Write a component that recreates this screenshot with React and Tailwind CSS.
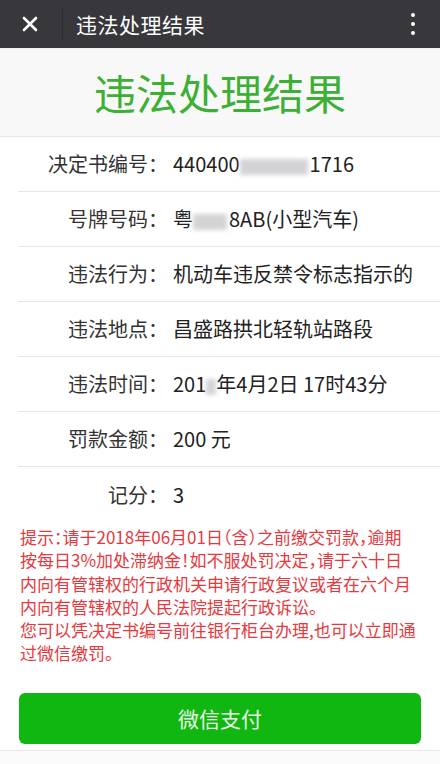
import { X } from 'lucide-react'

const FONT = { fontFamily: '"Noto Sans CJK SC", "Noto Sans", sans-serif' }

function Blur({ w }) {
  return <span className="inline-block h-[16px] align-middle bg-[#c9c9cc] blur-[2px] opacity-80" style={{ width: w }} />
}

const ROWS = [
  { label: '决定书编号：', value: <>440400<Blur w={68} /><span className="ml-[2px]">1716</span></> },
  { label: '号牌号码：', value: <>粤<Blur w={34} /><span className="ml-[2px]">8AB(小型汽车)</span></> },
  { label: '违法行为：', value: '机动车违反禁令标志指示的' },
  { label: '违法地点：', value: '昌盛路拱北轻轨站路段' },
  { label: '违法时间：', value: <>201<Blur w={10} />年4月2日 17时43分</> },
  { label: '罚款金额：', value: '200 元' },
  { label: '记分：', value: '3' },
]

const NOTICE = [
  '提示：请于2018年06月01日（含）之前缴交罚款，逾期',
  '按每日3%加处滞纳金！如不服处罚决定，请于六十日',
  '内向有管辖权的行政机关申请行政复议或者在六个月',
  '内向有管辖权的人民法院提起行政诉讼。',
  '您可以凭决定书编号前往银行柜台办理,也可以立即通',
  '过微信缴罚。',
]

export default function App() {
  return (
    <div className="w-[440px] h-[764px] bg-white flex flex-col overflow-hidden" style={FONT}>

      {/* ── Top bar ── */}
      <header className="h-[48px] shrink-0 bg-[#38373c] flex items-center">
        <div className="w-[62px] flex justify-center">
          <X size={24} strokeWidth={2.6} className="text-white -ml-[2px]" />
        </div>
        <div className="h-[32px] w-px bg-[#2e2d31]" />
        <h1 className="ml-[13px] text-[21px] text-white leading-none tracking-[0.5px]">违法处理结果</h1>
        <div className="ml-auto mr-[25px] flex flex-col gap-[5px]">
          <span className="w-[4px] h-[4px] rounded-full bg-white" />
          <span className="w-[4px] h-[4px] rounded-full bg-white" />
          <span className="w-[4px] h-[4px] rounded-full bg-white" />
        </div>
      </header>

      {/* ── Heading ── */}
      <div className="h-[89px] shrink-0 bg-[#f8f8f9] border-t border-[#f0f0f0] border-b border-b-[#e6e6e6] flex items-center justify-center">
        <h2 className="text-[42px] text-[#3cb034] leading-none -mt-[2px]">违法处理结果</h2>
      </div>

      {/* ── Detail rows ── */}
      <div>
        {ROWS.map((r, i) => (
          <div
            key={r.label}
            className={'h-[55px] flex items-center ml-[18px] ' + (i < ROWS.length - 1 ? 'border-b border-[#e6e6e6]' : '')}
          >
            <span className="w-[150px] text-right text-[20px] text-[#333]">{r.label}</span>
            <span className="ml-[5px] text-[20px] text-[#222] whitespace-nowrap">{r.value}</span>
          </div>
        ))}
      </div>

      {/* ── Notice ── */}
      <div className="px-[20px] pt-[3px] text-[17px] leading-[23.3px] text-[#e8383d] [font-feature-settings:'halt']">
        {NOTICE.map(line => (
          <p key={line} className="whitespace-nowrap">{line}</p>
        ))}
      </div>

      {/* ── Pay button ── */}
      <button className="mx-[19px] mt-[28px] h-[51px] shrink-0 rounded-[6px] bg-[#11b711] text-[21px] text-[#eaf7e8]">
        微信支付
      </button>

      <div className="mt-[6px] flex-1 border-t border-[#e6e6e6] bg-[#fbfbfb]" />
    </div>
  )
}
